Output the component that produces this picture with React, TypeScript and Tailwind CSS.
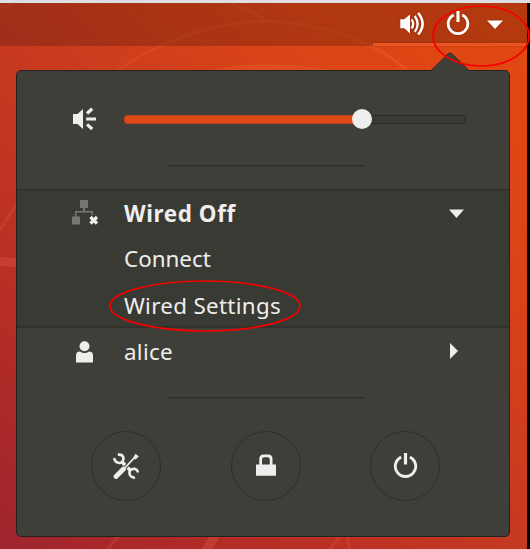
import React from "react";

const textFont = "font-['Noto_Sans','Open_Sans',sans-serif]";

function PowerIcon({ className, weight }: { className: string; weight: number }) {
  return (
    <svg viewBox="0 0 24 24" className={className} fill="none" stroke="currentColor" strokeWidth={weight}>
      <path d="M7.8 3.9A9.8 9.8 0 1 0 16.2 3.9" />
      <path d="M12 0V11" strokeWidth={weight + 0.3} />
    </svg>
  );
}

function Wallpaper() {
  return (
    <svg viewBox="0 0 530 549" className="absolute inset-0 h-full w-full" fill="none">
      <g stroke="#f56b35" strokeOpacity="0.2">
        <path d="M118 70Q185 24 265 21Q350 24 408 70" strokeWidth="3" />
        <path d="M230 3Q248 9 265 20" strokeWidth="3" />
        <path d="M0 8Q8 6 14 3" strokeWidth="3" />
        <path d="M370 44Q388 54 404 68" strokeWidth="3" />
        <path d="M0 230Q7 218 16 205" strokeWidth="3" />
        <path d="M108 549L118 536M330 549L340 536M347 536L350 549" strokeWidth="3" />
      </g>
      <path d="M0 257L16 258V267L0 266ZM202 549L209 536H220L213 549Z" fill="#f06a50" fillOpacity="0.25" />
      <path d="M210 70Q238 64 265 64Q300 64 330 70Z" fill="#f56b35" fillOpacity="0.25" />
    </svg>
  );
}

function Separator() {
  return <div className="ml-[151px] h-[2px] w-[196px] border-b border-[#383631] bg-[#302f2a]" />;
}

function RoundButton({ children }: { children: React.ReactNode }) {
  return (
    <button className="flex size-[70px] items-center justify-center rounded-full border-[1.5px] border-[#2f2e29] text-[#eeeeec]">
      {children}
    </button>
  );
}

export default function App() {
  return (
    <div className={`relative flex h-[549px] w-[530px] flex-col overflow-hidden border-t-[3px] border-[#dedfe5] bg-black pr-[3px] ${textFont}`}>
      <div className="relative h-[546px] bg-[linear-gradient(43deg,#9e242e_0%,#b72e25_25%,#c83a20_50%,#db4416_75%,#e24911_100%)]">
        <div className="absolute -top-[3px] left-0 h-[549px] w-[530px]">
          <Wallpaper />
        </div>
        <header className="relative flex h-[43px] justify-end bg-black/20">
          <div className="flex h-[43px] w-[154px] border-b-[3px] border-[#ec5323] text-white [filter:drop-shadow(0_0_1px_rgba(0,0,0,.2))]">
            <svg viewBox="0 0 26 24" className="mt-[8px] ml-[27px] h-[24px] w-[26px] shrink-0" fill="none" stroke="currentColor">
              <path d="M0.3 8.3H4.3L10 3.5V22.5L4.3 17.3H0.3Z" fill="currentColor" stroke="none" />
              <path d="M11.6 8.4Q14.8 12.9 11.6 17.4" strokeWidth="2.3" />
              <path d="M14.8 5Q20.4 12.9 14.8 20.8" strokeWidth="2.3" />
              <path d="M18.2 2Q27 12.9 18.2 23.6" strokeWidth="2.6" />
            </svg>
            <PowerIcon className="mt-[8px] ml-[20px] h-[24px] w-[24px] shrink-0" weight={2.8} />
            <svg viewBox="0 0 16 9" className="mt-[17px] ml-[17px] h-[9px] w-[16px] shrink-0" fill="currentColor">
              <path d="M0 .5H16L8 9Z" />
            </svg>
          </div>
        </header>

        <main className="relative mt-[24px] ml-[16px] flex h-[467px] w-[494px] flex-col rounded-[5px] border border-[#24231f] bg-[#403e38] text-[22.4px] text-[#eeeeec]">
          <svg viewBox="0 0 40 20" className="absolute -top-[19px] left-[413px] h-[20px] w-[40px]">
            <path d="M1 20V19L18.5 2Q20 1 21.5 2L39 19V20Z" fill="#403e38" />
            <path d="M0 18.5H1L18.5 1.5Q20 0.5 21.5 1.5L39 18.5H40" stroke="#24231f" fill="none" />
          </svg>

          <section className="h-[118px]">
            <div className="flex h-[94px] items-center pt-[2px] pl-[56px]">
              <svg viewBox="0 0 24 24" className="size-[24px] shrink-0" fill="none" stroke="currentColor">
                <path d="M0 7H4.5L10 2V22L4.5 17H0Z" fill="currentColor" stroke="none" />
                <path d="M13.2 12H23" strokeWidth="3" />
                <path d="M14 6.5L19.2 1.7M14 17.4L19.2 22" strokeWidth="3.2" />
              </svg>
              <div className="relative ml-[27px] flex h-[9px] w-[342px] items-center rounded-[3px] border-[1.5px] border-[#292925] bg-[#3a3a34]">
                <div className="absolute -top-px -left-px h-[9px] w-[239px] rounded-l-[3px] border border-[#b8431a] bg-[#e04915]" />
                <div className="absolute left-[227px] size-[20px] rounded-full bg-[#eeeeec]" />
              </div>
            </div>
            <Separator />
          </section>

          <section className="flex h-[139px] flex-col border-y-2 border-[#32312c] bg-[#3a3a34]">
            <div className="flex h-[45px] items-center pl-[55px]">
              <svg viewBox="0 0 27 26" className="-mt-[1px] h-[26px] w-[27px] shrink-0" fill="#777772">
                <path d="M8 0H16V8H8ZM0 16.5H8V24.5H0ZM11 8H13V11H11ZM3 11H21V15H19.5V12.5H4.5V17H3Z" />
                <path d="M18.5 17L25 23.5M25 17L18.5 23.5" stroke="#eeeeec" strokeWidth="3.2" />
              </svg>
              <span className="ml-[25px] font-bold tracking-[0.6px]">Wired Off</span>
              <svg viewBox="0 0 15 9" className="mr-[45px] ml-auto h-[9px] w-[15px]" fill="currentColor">
                <path d="M0 .5H15L7.5 9Z" />
              </svg>
            </div>
            <div className="flex h-[46px] items-center pl-[107px]">Connect</div>
            <div className="flex h-[44px] items-center pt-[3px] pl-[107px] tracking-[0.3px]">Wired Settings</div>
          </section>

          <section className="h-[72px]">
            <div className="flex h-[48px] items-center pl-[59px]">
              <svg viewBox="0 0 17 22" className="h-[22px] w-[17px] shrink-0" fill="currentColor">
                <circle cx="8.5" cy="5.3" r="5" />
                <path d="M0 21.5V14.5Q0 10.5 4 10.5Q8.5 13.5 13 10.5Q17 10.5 17 14.5V21.5Z" />
              </svg>
              <span className="ml-[31px] tracking-[0.3px]">alice</span>
              <svg viewBox="0 0 8 16" className="-mt-[2px] mr-[51px] ml-auto h-[16px] w-[8px]" fill="currentColor">
                <path d="M0 0L8 8L0 16Z" />
              </svg>
            </div>
            <div className="mt-[21px]"><Separator /></div>
          </section>

          <footer className="flex justify-between pt-[31px] pr-[69px] pl-[74px]">
            <RoundButton>
              <svg viewBox="0 0 26 26" className="size-[26px]" fill="none" stroke="currentColor">
                <path d="M4.8 1.8Q9 1 10.3 4.3Q10.8 7.8 8.8 9.2Q5.5 11 2.7 8.5Q1.2 6.8 1.5 5" strokeWidth="2.6" />
                <path d="M24.8 19.5Q24.7 16.6 22 15.9Q18.2 15.6 16.9 18Q15.7 20.9 17.8 23.2Q19.6 25 22 24.5" strokeWidth="2.6" />
                <path d="M8.5 8.5L17.5 17.5" strokeWidth="3.6" />
                <path d="M10.5 16.5L21.5 4.5" stroke="#403e38" strokeWidth="3.6" />
                <path d="M10.5 16.5L21.5 4.5" strokeWidth="1.8" />
                <path d="M3 23.5L10.5 16" strokeWidth="4.8" strokeLinecap="round" />
                <path d="M20 5L22.5 0.8L25.8 3.5L22.5 6.6Z" fill="currentColor" stroke="none" />
              </svg>
            </RoundButton>
            <RoundButton>
              <svg viewBox="0 0 20 22" className="-mt-[2px] h-[22px] w-[20px]" fill="currentColor">
                <path fillRule="evenodd" d="M0 10.5H3.3V5Q3.3 .5 7.5 .5H12.3Q16.5 .5 16.5 5V10.5H20V21.7H0ZM6 10.5H13.8V5.5Q13.8 3.2 11.5 3.2H8.3Q6 3.2 6 5.5Z" />
              </svg>
            </RoundButton>
            <RoundButton>
              <PowerIcon className="mt-[-1px] size-[25px]" weight={2.8} />
            </RoundButton>
          </footer>
        </main>
      </div>

      <svg viewBox="0 0 530 549" className="pointer-events-none absolute -top-[3px] left-0 h-[549px] w-[530px]" fill="none" stroke="#f50000" strokeWidth="1.7">
        <ellipse cx="481" cy="36" rx="48" ry="30" />
        <ellipse cx="205" cy="306" rx="95" ry="25" />
      </svg>
    </div>
  );
}
